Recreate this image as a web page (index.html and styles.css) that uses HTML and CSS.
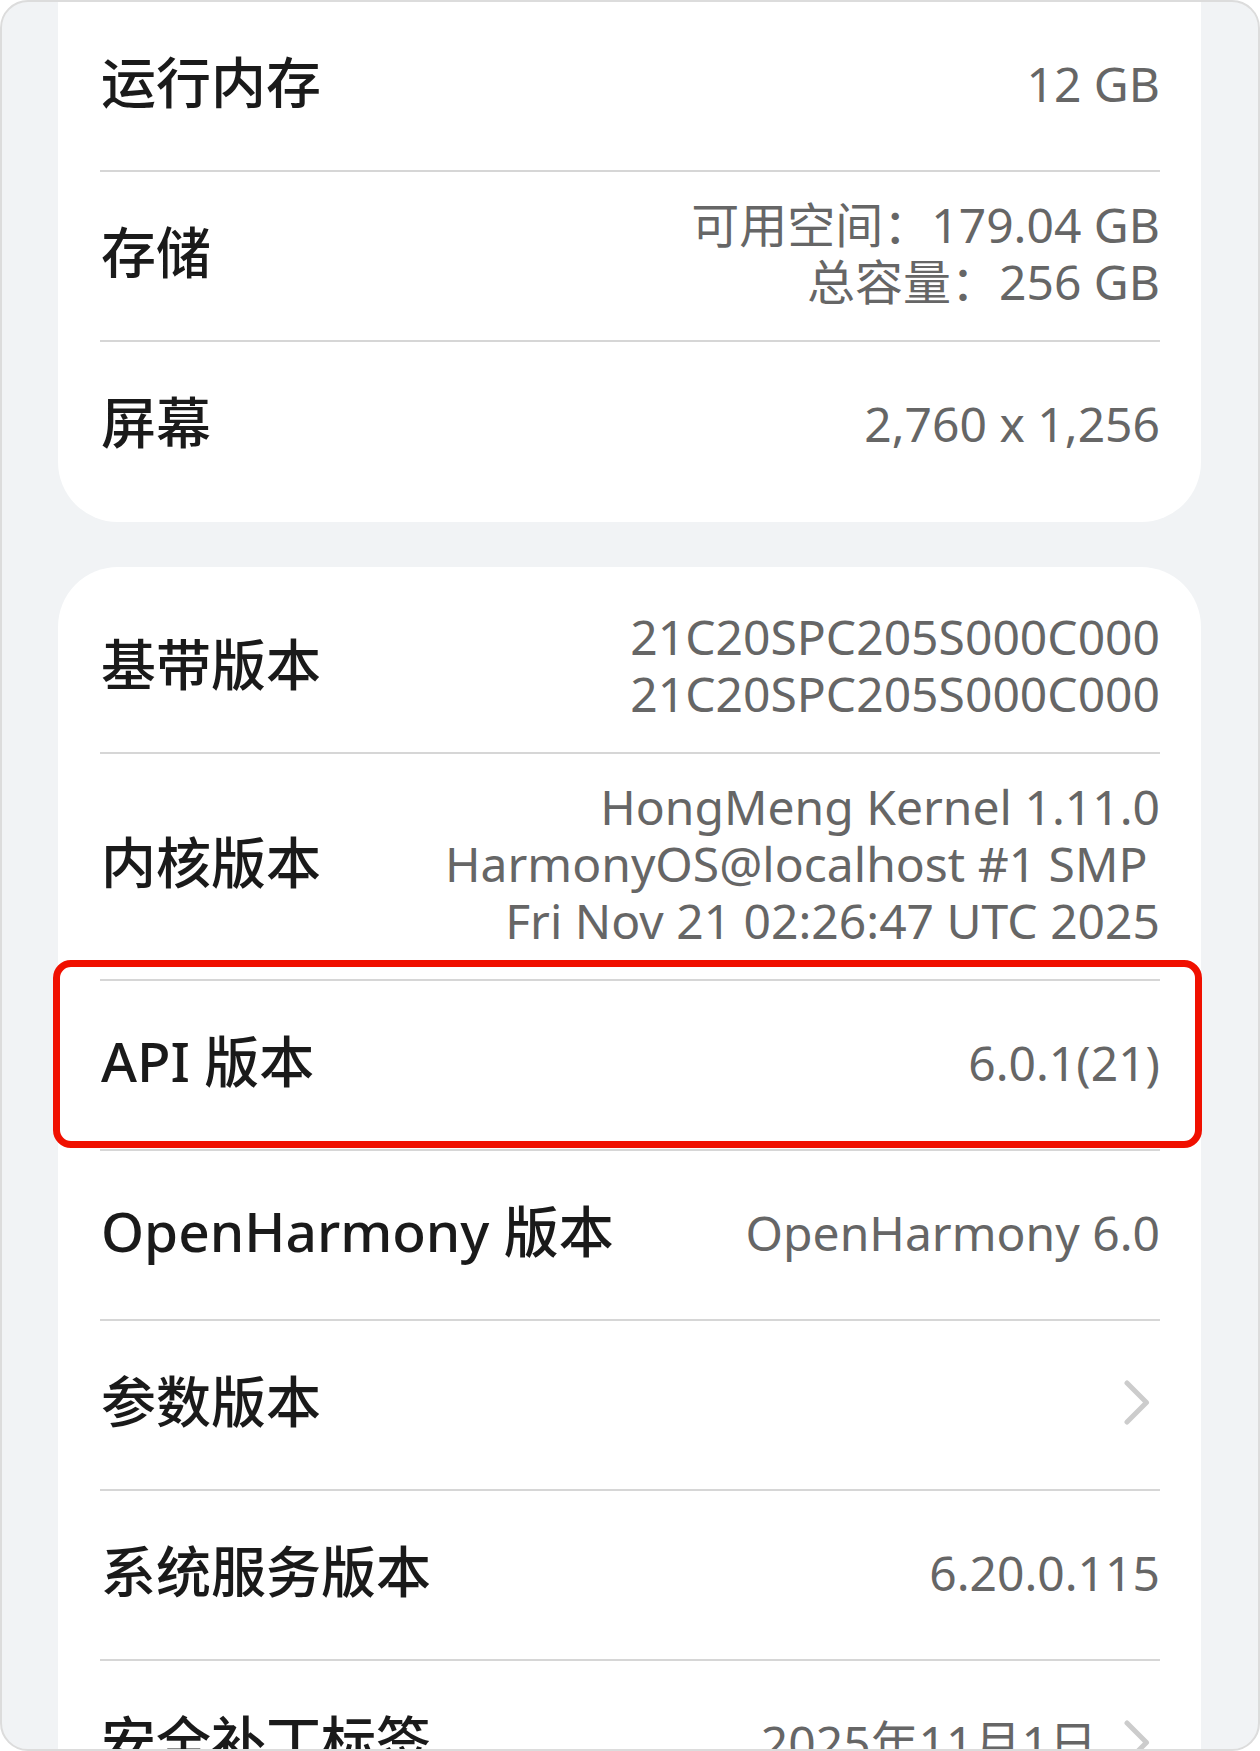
FILE: index.html
```html
<!DOCTYPE html>
<html lang="zh-CN">
<head>
<meta charset="utf-8">
<title>关于本机</title>
<link rel="stylesheet" href="styles.css">
</head>
<body>
<div class="frame">
  <section class="card card-top">
    <div class="row">
      <div class="label">运行内存</div>
      <div class="value">12 GB</div>
    </div>
    <div class="row">
      <div class="label">存储</div>
      <div class="value"><div>可用空间：179.04 GB</div><div>总容量：256 GB</div></div>
    </div>
    <div class="row">
      <div class="label">屏幕</div>
      <div class="value">2,760 x 1,256</div>
    </div>
  </section>

  <section class="card card-bottom">
    <div class="row">
      <div class="label">基带版本</div>
      <div class="value"><div>21C20SPC205S000C000</div><div>21C20SPC205S000C000</div></div>
    </div>
    <div class="row">
      <div class="label">内核版本</div>
      <div class="value"><div>HongMeng Kernel 1.11.0</div><div class="pre">HarmonyOS@localhost #1 SMP </div><div>Fri Nov 21 02:26:47 UTC 2025</div></div>
    </div>
    <div class="row row-highlight">
      <div class="label">API 版本</div>
      <div class="value">6.0.1(21)</div>
      <span class="highlight"></span>
    </div>
    <div class="row">
      <div class="label">OpenHarmony 版本</div>
      <div class="value">OpenHarmony 6.0</div>
    </div>
    <div class="row">
      <div class="label">参数版本</div>
      <svg class="chevron" width="26" height="45" viewBox="0 0 26 45"><path d="M3 3 L22.5 22.5 L3 42" fill="none" stroke="#cccccc" stroke-width="5" stroke-linecap="round" stroke-linejoin="round"/></svg>
    </div>
    <div class="row">
      <div class="label">系统服务版本</div>
      <div class="value">6.20.0.115</div>
    </div>
    <div class="row">
      <div class="label">安全补丁标签</div>
      <div class="value-wrap">
        <div class="value">2025年11月1日</div>
        <svg class="chevron chevron-after" width="26" height="45" viewBox="0 0 26 45"><path d="M3 3 L22.5 22.5 L3 42" fill="none" stroke="#cccccc" stroke-width="5" stroke-linecap="round" stroke-linejoin="round"/></svg>
      </div>
    </div>
  </section>
</div>
</body>
</html>
```

FILE: styles.css
```css
html, body {
  margin: 0;
  padding: 0;
  background: #ffffff;
}

body {
  font-family: "Noto Sans", "Noto Sans CJK SC", sans-serif;
}

.frame {
  box-sizing: border-box;
  width: 1260px;
  height: 1751px;
  border: 2px solid #dcdcdc;
  border-radius: 28px;
  background: #f1f3f5;
  overflow: hidden;
  padding: 0 57px 0 56px;
}

.card {
  background: #ffffff;
  padding: 0 41px 0 42px;
}

.card-top {
  border-radius: 0 0 60px 60px;
  padding-bottom: 12px;
}

.card-bottom {
  margin-top: 45px;
  border-radius: 60px 60px 0 0;
  padding-top: 17px;
  height: 1400px;
}

.row {
  box-sizing: border-box;
  min-height: 170px;
  padding: 24px 0 30px;
  display: flex;
  align-items: center;
  justify-content: space-between;
  border-top: 2px solid #d6d6d6;
  position: relative;
}

.row:first-child {
  border-top: none;
  min-height: 168px;
}

.label {
  font-family: "Noto Sans", "Noto Sans CJK SC", sans-serif;
  font-size: 55px;
  line-height: 66px;
  font-weight: 500;
  color: #1a1a1a;
  white-space: nowrap;
  padding-left: 1px;
  margin-bottom: 3px;
}

.value {
  font-size: 48px;
  line-height: 57px;
  color: #666666;
  text-align: right;
  white-space: nowrap;
}

.pre {
  white-space: pre;
}

.value-wrap {
  display: flex;
  align-items: center;
}

.chevron {
  display: block;
  margin-right: 10px;
}

.chevron-after {
  margin-left: 27px;
}

.highlight {
  position: absolute;
  left: -47px;
  right: -42px;
  top: -21px;
  bottom: 1px;
  border: 7px solid #f01000;
  border-radius: 18px;
  pointer-events: none;
}
```
